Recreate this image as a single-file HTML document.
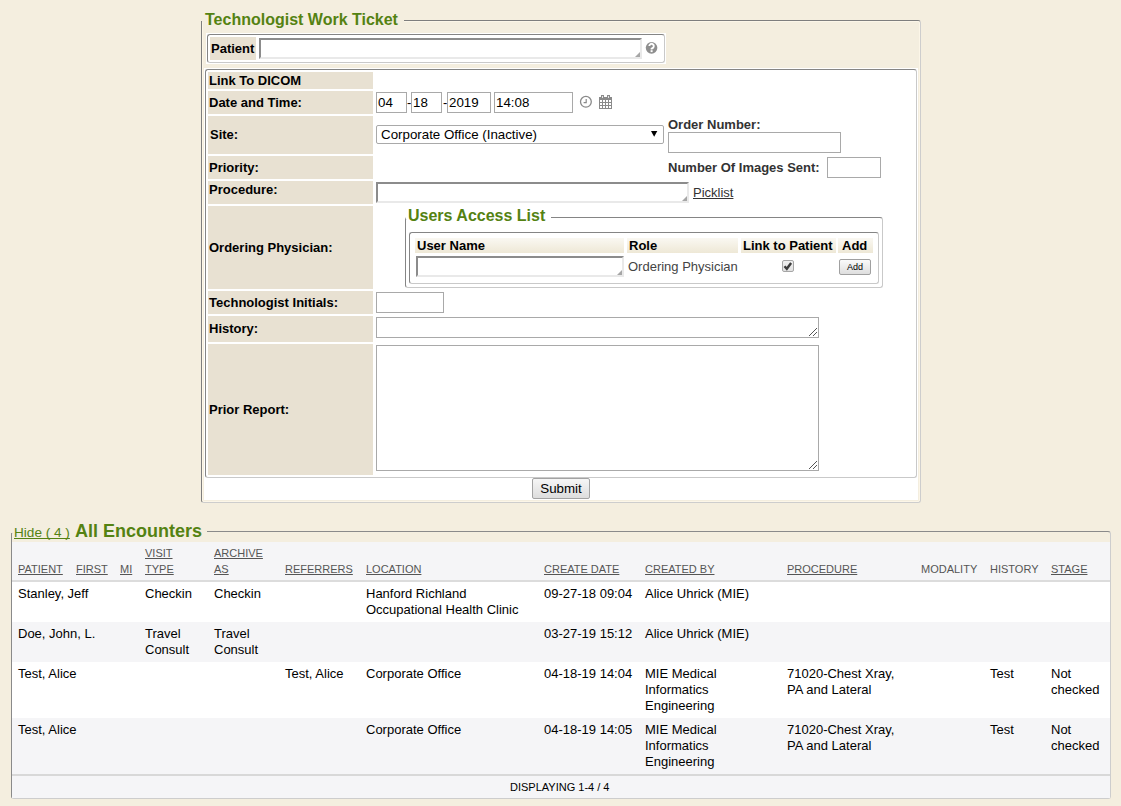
<!DOCTYPE html>
<html><head><meta charset="utf-8">
<style>
html,body{margin:0;padding:0}
body{width:1121px;height:806px;background:#F4EEDF;position:relative;overflow:hidden;font-family:"Liberation Sans",sans-serif;color:#000}
.a{position:absolute}
.t{position:absolute;white-space:nowrap;font-size:13px;line-height:15px}
.b{font-weight:bold}
.lab{position:absolute;background:#E8E1D2;left:208px;width:165px}
.inp{position:absolute;background:#fff;border:1px solid #A9A9A9;box-sizing:border-box}
.ins{position:absolute;background:#fff;box-sizing:border-box;border-style:solid;border-width:2px;border-color:#8C8C8C #E9E9E9 #E9E9E9 #8C8C8C}
.grn{color:#548212}
.hd{position:absolute;white-space:nowrap;font-size:11px;line-height:15px;color:#555;text-decoration:underline}
.hdn{position:absolute;white-space:nowrap;font-size:11px;line-height:15px;color:#555}
.d{position:absolute;white-space:nowrap;font-size:13px;line-height:16px;color:#000}
.uh{background:linear-gradient(#FAF8F2,#EEE8D6)}
.ctl{font-size:13.33px}
*{text-decoration-skip-ink:none}
</style></head><body>

<!-- ========== Technologist Work Ticket ========== -->
<div class="a" style="left:201px;top:20px;width:720px;height:483px;box-sizing:border-box;border:1px solid;border-color:#7E7E7E #CDCDCD #CDCDCD #7E7E7E;border-radius:0 3px 3px 3px"></div>
<div class="a" style="left:202px;top:21px;width:718px;height:481px;box-sizing:border-box;border:1px solid #FCF6E8;border-radius:2px"></div>
<div class="a" style="left:200px;top:8px;width:204px;height:13px;background:#F4EEDF"></div>
<div class="a" style="left:202px;top:21px;width:202px;height:1px;background:#F4EEDF"></div>
<div class="t b grn" style="left:205px;top:12px;font-size:16px">Technologist Work Ticket</div>

<!-- patient fieldset -->
<div class="a" style="left:206px;top:33px;width:460px;height:31px;background:#fff"></div>
<div class="a" style="left:207px;top:34px;width:458px;height:29px;box-sizing:border-box;border:1px solid;border-color:#858585 #C9C9C9 #C9C9C9 #858585;border-radius:3px"></div>
<div class="a" style="left:210px;top:37px;width:46px;height:23px;background:#E8E1D2"></div>
<div class="t b" style="left:211px;top:41px">Patient</div>
<div class="ins" style="left:259px;top:38px;width:383px;height:21px"></div>
<svg class="a" style="left:640px;top:36px" width="24" height="24" viewBox="640 36 24 24"><circle cx="651.55" cy="47.85" r="5.8" fill="#8E8E8E"/><path d="M649.3 46.1A2.25 2.25 0 1 1 652.9 47.9L651.6 48.8V49.4" fill="none" stroke="#fff" stroke-width="1.9"/><rect x="650.6" y="50.2" width="2" height="1.9" fill="#fff"/></svg>

<!-- white container -->
<div class="a" style="left:204px;top:68px;width:714px;height:432px;background:#fff"></div>
<div class="a" style="left:205px;top:69px;width:712px;height:409px;box-sizing:border-box;border:1px solid;border-color:#858585 #C9C9C9 #C9C9C9 #858585;border-radius:3px"></div>

<!-- label column -->
<div class="lab" style="top:72px;height:17px"></div>
<div class="lab" style="top:91px;height:23px"></div>
<div class="lab" style="top:116px;height:38px"></div>
<div class="lab" style="top:156px;height:23px"></div>
<div class="lab" style="top:181px;height:23px"></div>
<div class="lab" style="top:206px;height:83px"></div>
<div class="lab" style="top:291px;height:23px"></div>
<div class="lab" style="top:316px;height:26px"></div>
<div class="lab" style="top:344px;height:131px"></div>

<div class="t b" style="left:209px;top:73px">Link To DICOM</div>
<div class="t b" style="left:209px;top:95px">Date and Time:</div>
<div class="t b" style="left:210px;top:127px">Site:</div>
<div class="t b" style="left:209px;top:160px">Priority:</div>
<div class="t b" style="left:209px;top:182px">Procedure:</div>
<div class="t b" style="left:209px;top:240px">Ordering Physician:</div>
<div class="t b" style="left:209px;top:295px">Technologist Initials:</div>
<div class="t b" style="left:209px;top:321px">History:</div>
<div class="t b" style="left:209px;top:402px">Prior Report:</div>

<!-- date/time -->
<div class="inp" style="left:376px;top:92px;width:31px;height:21px"></div>
<div class="t ctl" style="left:378px;top:95px">04</div>
<div class="t" style="left:407px;top:95px">-</div>
<div class="inp" style="left:411px;top:92px;width:31px;height:21px"></div>
<div class="t ctl" style="left:413px;top:95px">18</div>
<div class="t" style="left:443px;top:95px">-</div>
<div class="inp" style="left:447px;top:92px;width:44px;height:21px"></div>
<div class="t ctl" style="left:449px;top:95px">2019</div>
<div class="inp" style="left:494px;top:92px;width:79px;height:21px"></div>
<div class="t ctl" style="left:496px;top:95px">14:08</div>
<!-- clock -->
<svg class="a" style="left:579px;top:95px" width="14" height="14" viewBox="0 0 14 14"><circle cx="6.9" cy="6.8" r="5.4" fill="none" stroke="#8A8A8A" stroke-width="1.3"/><path d="M7.2 3.9V7.6H4.6" fill="none" stroke="#8A8A8A" stroke-width="1.2"/></svg>
<!-- calendar -->
<svg class="a" style="left:599px;top:95px" width="13" height="14" viewBox="0 0 13 14" shape-rendering="crispEdges"><rect x="0" y="2" width="13" height="12" fill="#8A8A8A"/><rect x="1" y="5" width="2" height="2" fill="#fff"/><rect x="1" y="8" width="2" height="2" fill="#fff"/><rect x="1" y="11" width="2" height="2" fill="#fff"/><rect x="4" y="5" width="2" height="2" fill="#fff"/><rect x="4" y="8" width="2" height="2" fill="#fff"/><rect x="4" y="11" width="2" height="2" fill="#fff"/><rect x="7" y="5" width="2" height="2" fill="#fff"/><rect x="7" y="8" width="2" height="2" fill="#fff"/><rect x="7" y="11" width="2" height="2" fill="#fff"/><rect x="10" y="5" width="2" height="2" fill="#fff"/><rect x="10" y="8" width="2" height="2" fill="#fff"/><rect x="10" y="11" width="2" height="2" fill="#fff"/><rect x="2" y="0" width="3" height="4" fill="#8A8A8A"/><rect x="3" y="1" width="1" height="2" fill="#E6E6E6"/><rect x="8" y="0" width="3" height="4" fill="#8A8A8A"/><rect x="9" y="1" width="1" height="2" fill="#E6E6E6"/></svg>

<!-- site select -->
<div class="inp" style="left:376px;top:125px;width:288px;height:19px;border-radius:2px"></div>
<div class="t ctl" style="left:381px;top:127px">Corporate Office (Inactive)</div>
<svg class="a" style="left:648px;top:128px" width="12" height="12" viewBox="648 128 12 12"><polygon points="651,131 657.3,131 654.15,136.8" fill="#000"/></svg>
<div class="t b" style="left:668px;top:117px;color:#333">Order Number:</div>
<div class="inp" style="left:668px;top:132px;width:173px;height:21px"></div>
<div class="t b" style="left:668px;top:160px;color:#333">Number Of Images Sent:</div>
<div class="inp" style="left:827px;top:157px;width:54px;height:21px"></div>

<!-- procedure -->
<div class="ins" style="left:376px;top:182px;width:313px;height:21px"></div>
<div class="t" style="left:693px;top:185px;color:#333;text-decoration:underline">Picklist</div>

<!-- users access list -->
<div class="a" style="left:405px;top:217px;width:478px;height:71px;box-sizing:border-box;border:1px solid;border-color:#858585 #C9C9C9 #C9C9C9 #858585;border-radius:3px"></div>
<div class="a" style="left:406px;top:205px;width:145px;height:14px;background:#fff"></div>
<div class="t b grn" style="left:408px;top:208px;font-size:16px">Users Access List</div>
<div class="a" style="left:409px;top:232px;width:470px;height:52px;box-sizing:border-box;border:1px solid;border-color:#858585 #C9C9C9 #C9C9C9 #858585;border-radius:3px"></div>
<div class="a uh" style="left:415px;top:238px;width:209px;height:15px"></div>
<div class="a uh" style="left:627px;top:238px;width:111px;height:15px"></div>
<div class="a uh" style="left:741px;top:238px;width:95px;height:15px"></div>
<div class="a uh" style="left:838px;top:238px;width:35px;height:15px"></div>
<div class="t b" style="left:417px;top:238px">User Name</div>
<div class="t b" style="left:629px;top:238px">Role</div>
<div class="t b" style="left:743px;top:238px">Link to Patient</div>
<div class="t b" style="left:842px;top:238px">Add</div>
<div class="ins" style="left:416px;top:256px;width:208px;height:21px"></div>
<div class="t" style="left:628px;top:259px;color:#444">Ordering Physician</div>
<div class="a" style="left:782px;top:260px;width:12px;height:12px;box-sizing:border-box;border:1px solid #A6A6A6;border-radius:2px;background:linear-gradient(#F0F0F0,#E2E2E2)"></div>
<svg class="a" style="left:776px;top:254px" width="24" height="24" viewBox="0 0 24 24"><path d="M8.5 12.3L10.8 14.8L15.1 9" fill="none" stroke="#3C3C3C" stroke-width="2.4"/></svg>
<div class="a" style="left:839px;top:259px;width:32px;height:16px;box-sizing:border-box;border:1px solid #A0A0A0;border-radius:2px;background:linear-gradient(#FAFAFA,#DEDEDE);font:9px/14px 'Liberation Sans';text-align:center">Add</div>

<!-- initials / history / prior -->
<div class="inp" style="left:376px;top:292px;width:68px;height:21px"></div>
<div class="inp" style="left:376px;top:317px;width:443px;height:21px"></div>
<div class="inp" style="left:376px;top:345px;width:443px;height:126px"></div>


<!-- grips -->
<svg class="a" style="left:0;top:0" width="1121" height="806" viewBox="0 0 1121 806">
<polygon points="635,57 640,57 640,52" fill="#A6A6A6"/>
<polygon points="682,201 687,201 687,196" fill="#A6A6A6"/>
<polygon points="617,275 622,275 622,270" fill="#A6A6A6"/>
<g fill="#555" shape-rendering="crispEdges"><rect x="809" y="335" width="1" height="1"/><rect x="810" y="334" width="1" height="1"/><rect x="811" y="333" width="1" height="1"/><rect x="812" y="332" width="1" height="1"/><rect x="813" y="331" width="1" height="1"/><rect x="814" y="330" width="1" height="1"/><rect x="815" y="329" width="1" height="1"/><rect x="816" y="328" width="1" height="1"/><rect x="813" y="335" width="1" height="1"/><rect x="814" y="334" width="1" height="1"/><rect x="815" y="333" width="1" height="1"/><rect x="816" y="332" width="1" height="1"/><rect x="809" y="468" width="1" height="1"/><rect x="810" y="467" width="1" height="1"/><rect x="811" y="466" width="1" height="1"/><rect x="812" y="465" width="1" height="1"/><rect x="813" y="464" width="1" height="1"/><rect x="814" y="463" width="1" height="1"/><rect x="815" y="462" width="1" height="1"/><rect x="816" y="461" width="1" height="1"/><rect x="813" y="468" width="1" height="1"/><rect x="814" y="467" width="1" height="1"/><rect x="815" y="466" width="1" height="1"/><rect x="816" y="465" width="1" height="1"/></g>
</svg>

<!-- submit -->
<div class="a" style="left:532px;top:478px;width:58px;height:21px;box-sizing:border-box;border:1px solid #A3A3A3;border-radius:2px;background:linear-gradient(#F6F6F6,#DDDDDD);font:13.33px/19px 'Liberation Sans';text-align:center">Submit</div>

<!-- ========== All Encounters ========== -->
<div class="a" style="left:11px;top:531px;width:1100px;height:268px;box-sizing:border-box;border:1px solid;border-color:#8A8A8A #CDCDCD #CDCDCD #8A8A8A;border-radius:3px"></div>
<div class="a" style="left:10px;top:518px;width:197px;height:15px;background:#F4EEDF"></div>
<div class="t grn" style="left:14px;top:525px;font-size:13.6px;text-decoration:underline">Hide ( 4 )</div>
<div class="t b grn" style="left:75px;top:524px;font-size:18px">All Encounters</div>

<div class="a" style="left:12px;top:542px;width:1098px;height:38px;background:#F5F5F7"></div>
<div class="a" style="left:12px;top:580px;width:1098px;height:2px;background:#DCDCDC"></div>
<div class="a" style="left:12px;top:582px;width:1098px;height:40px;background:#FFFFFF"></div>
<div class="a" style="left:12px;top:622px;width:1098px;height:40px;background:#F5F5F7"></div>
<div class="a" style="left:12px;top:662px;width:1098px;height:56px;background:#FFFFFF"></div>
<div class="a" style="left:12px;top:718px;width:1098px;height:56px;background:#F5F5F7"></div>
<div class="a" style="left:12px;top:774px;width:1098px;height:2px;background:#D8D8D8"></div>
<div class="a" style="left:12px;top:776px;width:1098px;height:22px;background:#F5F5F7"></div>

<div class="hd" style="left:18px;top:562px">PATIENT</div>
<div class="hd" style="left:76px;top:562px">FIRST</div>
<div class="hd" style="left:120px;top:562px">MI</div>
<div class="hd" style="left:145px;top:546px">VISIT</div>
<div class="hd" style="left:145px;top:562px">TYPE</div>
<div class="hd" style="left:214px;top:546px">ARCHIVE</div>
<div class="hd" style="left:214px;top:562px">AS</div>
<div class="hd" style="left:285px;top:562px">REFERRERS</div>
<div class="hd" style="left:366px;top:562px">LOCATION</div>
<div class="hd" style="left:544px;top:562px">CREATE DATE</div>
<div class="hd" style="left:645px;top:562px">CREATED BY</div>
<div class="hd" style="left:787px;top:562px">PROCEDURE</div>
<div class="hdn" style="left:921px;top:562px">MODALITY</div>
<div class="hdn" style="left:990px;top:562px">HISTORY</div>
<div class="hd" style="left:1051px;top:562px">STAGE</div>

<!-- row 1 -->
<div class="d" style="left:18px;top:586px">Stanley, Jeff</div>
<div class="d" style="left:145px;top:586px">Checkin</div>
<div class="d" style="left:214px;top:586px">Checkin</div>
<div class="d" style="left:366px;top:586px">Hanford Richland<br>Occupational Health Clinic</div>
<div class="d" style="left:544px;top:586px">09-27-18 09:04</div>
<div class="d" style="left:645px;top:586px">Alice Uhrick (MIE)</div>
<!-- row 2 -->
<div class="d" style="left:18px;top:626px">Doe, John, L.</div>
<div class="d" style="left:145px;top:626px">Travel<br>Consult</div>
<div class="d" style="left:214px;top:626px">Travel<br>Consult</div>
<div class="d" style="left:544px;top:626px">03-27-19 15:12</div>
<div class="d" style="left:645px;top:626px">Alice Uhrick (MIE)</div>
<!-- row 3 -->
<div class="d" style="left:18px;top:666px">Test, Alice</div>
<div class="d" style="left:285px;top:666px">Test, Alice</div>
<div class="d" style="left:366px;top:666px">Corporate Office</div>
<div class="d" style="left:544px;top:666px">04-18-19 14:04</div>
<div class="d" style="left:645px;top:666px">MIE Medical<br>Informatics<br>Engineering</div>
<div class="d" style="left:787px;top:666px">71020-Chest Xray,<br>PA and Lateral</div>
<div class="d" style="left:990px;top:666px">Test</div>
<div class="d" style="left:1051px;top:666px">Not<br>checked</div>
<!-- row 4 -->
<div class="d" style="left:18px;top:722px">Test, Alice</div>
<div class="d" style="left:366px;top:722px">Corporate Office</div>
<div class="d" style="left:544px;top:722px">04-18-19 14:05</div>
<div class="d" style="left:645px;top:722px">MIE Medical<br>Informatics<br>Engineering</div>
<div class="d" style="left:787px;top:722px">71020-Chest Xray,<br>PA and Lateral</div>
<div class="d" style="left:990px;top:722px">Test</div>
<div class="d" style="left:1051px;top:722px">Not<br>checked</div>

<div class="hdn" style="left:510px;top:780px;color:#000">DISPLAYING 1-4 / 4</div>

</body></html>
